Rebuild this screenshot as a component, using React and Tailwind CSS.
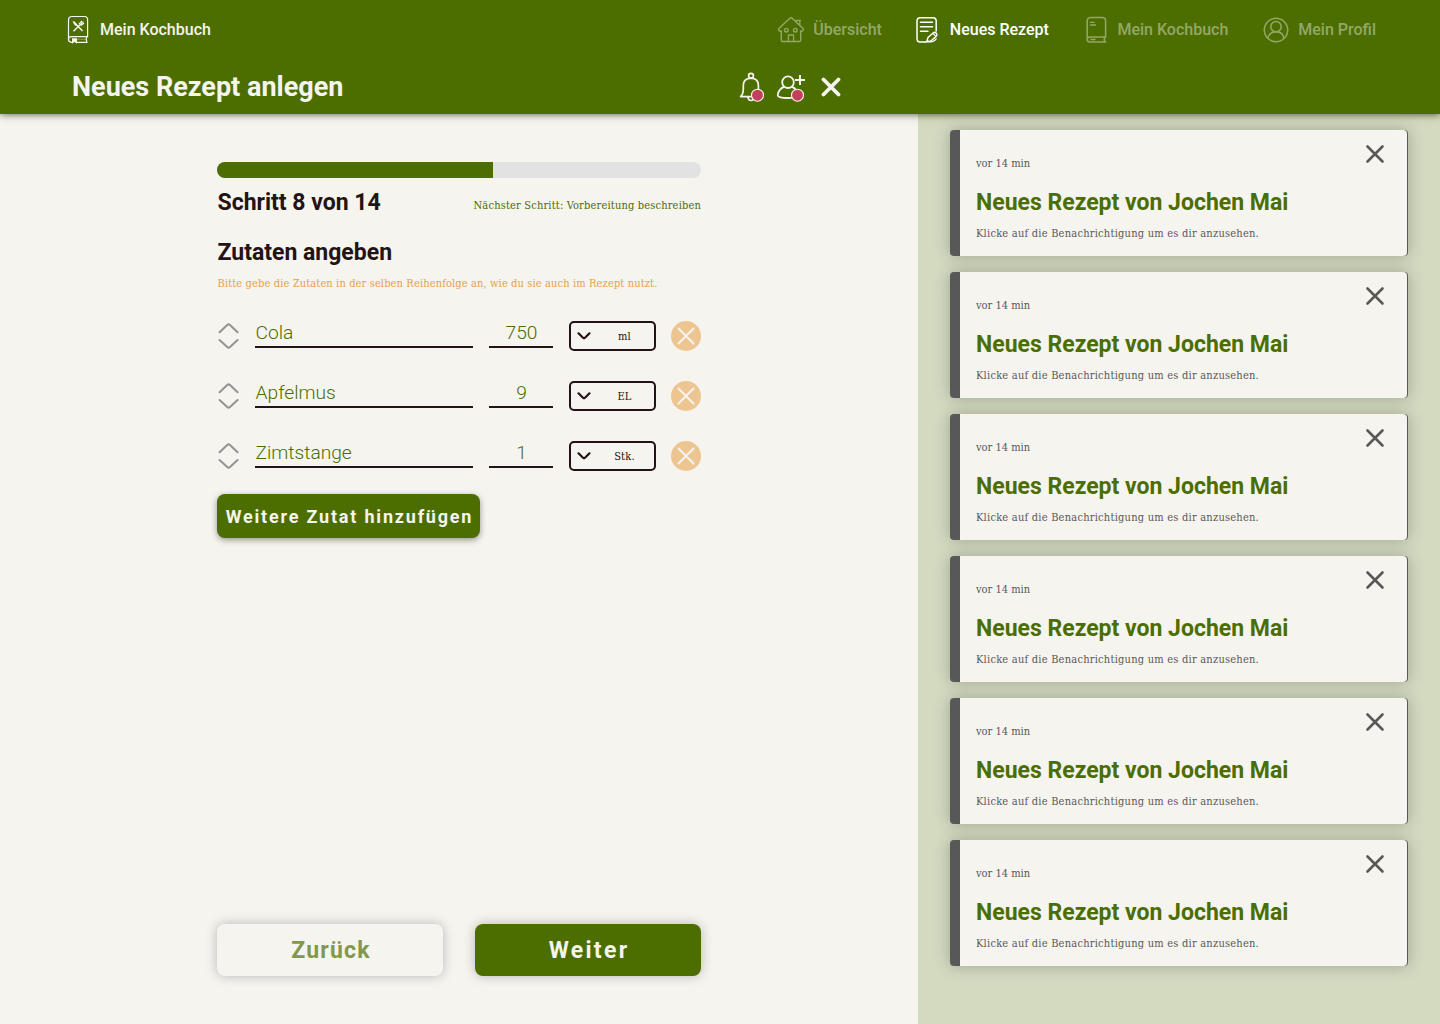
import React from "react";

const slab = "font-['Roboto_Slab','DejaVu_Serif_Condensed','DejaVu_Serif',serif]";

function CookbookLogo() {
  return (
    <svg width="22" height="30" viewBox="0 0 22 30" fill="none" stroke="#F6F4EF" strokeWidth="1.2">
      <path d="M1.5 25V5Q1.5 1.5 5 1.5H17.5Q20.6 1.5 20.6 4.6V21.6H4.5Q1.5 21.6 1.5 24.6Q1.5 27.3 4.5 27.3H5M9.5 27.3H20.6M19.8 21.6Q18.6 24.5 19.8 27.3" />
      <path d="M9 24.3H19" strokeWidth=".6" opacity=".6" />
      <path d="M5 23.3H10V28.8L7.5 27L5 28.8Z" fill="#F6F4EF" stroke="none" />
      <path d="M7 7L15.5 16M6.5 16.3L13 9.8" strokeWidth="1.5" />
      <path d="M5.6 5.8Q9.5 7.8 10.2 11L8.4 10.8Q6.2 9 5.6 5.8Z" fill="#F6F4EF" stroke="none" />
      <path d="M12 9L15 5.8M13 10L16.3 6.6M14 10.7L17 8" strokeWidth="1.1" />
    </svg>
  );
}

function HouseIcon() {
  return (
    <svg width="28" height="28" viewBox="0 0 28 28" fill="none" stroke="currentColor" strokeWidth="1.4" strokeLinejoin="round" strokeLinecap="round">
      <path d="M4.3 15.2V24Q4.3 25.5 5.8 25.5H22.2Q23.7 25.5 23.7 24V15.2" />
      <path d="M4.3 15.2H3.2Q.6 14.2 2.2 12.2L12.6 2.4Q14 1.2 15.4 2.4L25.8 12.2Q27.4 14.2 24.8 15.2H23.7" />
      <path d="M19.8 5.8V4.4H22.8V9M19 4.4H23.5M11.4 25.5V19H16.6V25.5" strokeWidth="1.3" />
      <circle cx="9.3" cy="14.2" r="1.8" />
      <circle cx="18.3" cy="14.2" r="1.8" />
    </svg>
  );
}

function NoteIcon() {
  return (
    <svg width="24" height="28" viewBox="0 0 24 28" fill="none" stroke="currentColor" strokeWidth="1.5" strokeLinejoin="round" strokeLinecap="round">
      <path d="M10.5 26H5Q2 26 2 22.5V5Q2 1.7 5.2 1.7H18Q21.2 1.7 21.2 5V15" />
      <path d="M5.5 6.2H17.5M5.5 10.7H17.5M5.5 15.2H13" />
      <path d="M11.8 25.5L13 21.5L18.4 16.8Q20 15.8 21.4 17.2Q22.5 18.6 21.3 20.2L15.8 25Z" />
      <path d="M18 17.3L20.6 20.2M10.5 26H14Q19 26 21.2 22.8" strokeWidth="1.2" />
    </svg>
  );
}

function BookIcon() {
  return (
    <svg width="22" height="28" viewBox="0 0 22 28" fill="none" stroke="currentColor" strokeWidth="1.5" strokeLinejoin="round" strokeLinecap="round">
      <path d="M1.2 23.5V5Q1.2 1.6 4.6 1.6H16.4Q19.6 1.6 19.6 4.8V21H4Q1.2 21 1.2 23.5Q1.2 26 4 26H19.6M18.8 21Q17.7 23.5 18.8 26" />
      <path d="M4.5 6.4H8M4.5 9H9.6M5 23.5H9" strokeWidth="1.4" />
    </svg>
  );
}

function ProfileIcon() {
  return (
    <svg width="26" height="26" viewBox="0 0 26 26" fill="none" stroke="currentColor" strokeWidth="1.5">
      <circle cx="13" cy="13" r="11.7" />
      <circle cx="13" cy="9.7" r="5.2" />
      <path d="M5 21.5Q6 14.8 13 14.8Q20 14.8 21 21.5" />
    </svg>
  );
}

function BellIcon() {
  return (
    <svg width="26" height="32" viewBox="0 0 26 32" fill="none" stroke="#F6F4EF" strokeWidth="1.7" strokeLinejoin="round">
      <circle cx="12" cy="3.7" r="2.4" />
      <path d="M1.6 24.6Q4.2 22.2 4.3 17V13.5Q4.3 6.6 12 6.2Q19.4 6.6 19.4 13.5V17Q19.5 22.2 22 24.6Z" />
      <path d="M9 24.8Q9.2 28.5 12 28.5Q15 28.5 15 24.8" />
      <circle cx="18.5" cy="23.2" r="6" fill="#C4405A" strokeWidth="1.1" />
    </svg>
  );
}

function AddPersonIcon() {
  return (
    <svg width="30" height="32" viewBox="0 0 30 32" fill="none" stroke="#F6F4EF" strokeWidth="1.8">
      <circle cx="12" cy="10.2" r="5.8" />
      <path d="M8.3 14.6Q2.4 17.2 1.7 23Q1.8 26.1 12 26Q22 26.1 22.3 23Q21.4 17.2 15.7 14.6" />
      <path d="M24 3V13M19 8H29" strokeWidth="1.9" />
      <circle cx="21.5" cy="23.2" r="6" fill="#C4405A" strokeWidth="1.1" />
    </svg>
  );
}

function Cross({ size, width }) {
  return (
    <svg width={size} height={size} viewBox="0 0 20 20" fill="none" stroke="currentColor" strokeWidth={width} strokeLinecap="round">
      <path d="M2.5 2.5L17.5 17.5M17.5 2.5L2.5 17.5" />
    </svg>
  );
}

function NavItem({ icon, label, className }) {
  return (
    <a className={"flex items-center whitespace-nowrap text-base font-medium " + className}>
      {icon}
      <span>{label}</span>
    </a>
  );
}

function IngredientRow({ name, amount, unit }) {
  return (
    <div className="flex h-[30px] items-center">
      <svg width="22" height="28" viewBox="0 0 22 28" fill="none" stroke="#939393" strokeWidth="2" strokeLinecap="round" className="shrink-0">
        <path d="M2.6 10.3L10.2 3Q11.6 1.8 13 3L20.6 10.3M2.6 18L10.2 25Q11.6 26.2 13 25L20.6 18" />
      </svg>
      <div className="mb-[4px] ml-4 h-[28px] w-[218px] border-b-2 border-[#231314] pl-[0.5px] text-[19.2px] font-light leading-[25px] text-[#4C6E00]">{name}</div>
      <div className="mb-[4px] ml-4 h-[28px] w-[64px] border-b-2 border-[#231314] pl-px text-center text-[19.2px] font-light leading-[25px] text-[#4C6E00]">{amount}</div>
      <div className="ml-4 flex h-[30px] w-[87px] items-center rounded-[5px] border-2 border-[#231314] text-[#231314]">
        <svg width="14" height="8" viewBox="0 0 14 8" fill="none" stroke="currentColor" strokeWidth="2.2" strokeLinecap="round" className="ml-[5.5px] shrink-0">
          <path d="M1.5 1.3L6 5.8Q7 6.7 8 5.8L12.5 1.3" />
        </svg>
        <span className={"ml-[14px] mt-[2px] w-[40px] text-center text-[11px] tracking-[0.2px] " + slab}>{unit}</span>
      </div>
      <div className="ml-[15px] flex size-[30px] items-center justify-center rounded-full bg-[#EDC591] text-[#F6F4EF]">
        <Cross size={20} width={2} />
      </div>
    </div>
  );
}

function Notification() {
  return (
    <article className="flex h-[126px] shrink-0 rounded bg-[#585858] pl-[10px] pr-px text-[#585858] shadow-[0_0_16px_rgba(0,0,0,0.25)]">
      <div className="flex flex-1 justify-between rounded-r bg-[#F6F4EF] pl-4 pr-[22px]">
        <div className="whitespace-nowrap">
          <p className={"mt-[26px] h-4 text-[11px] leading-4 " + slab}>vor 14 min</p>
          <h3 className="mt-[15px] h-8 text-[23px] font-bold leading-8 text-[#4C6E00]">Neues Rezept von Jochen Mai</h3>
          <p className={"mt-[7px] h-4 text-[11px] leading-4 tracking-[0.22px] " + slab}>Klicke auf die Benachrichtigung um es dir anzusehen.</p>
        </div>
        <button className="mt-[14px] size-5 shrink-0"><Cross size={20} width={2.6} /></button>
      </div>
    </article>
  );
}

export default function App() {
  return (
    <div className="flex h-[1024px] w-[1440px] flex-col overflow-hidden bg-[#F6F4EF] font-[Roboto,sans-serif]">
      <header className="relative z-10 h-[114px] shrink-0 bg-[#4C6E00] text-[#F6F4EF] shadow-[0_0_8px_rgba(0,0,0,0.7)]">
        <div className="flex h-[60px] items-center justify-between pl-[67px] pr-16">
          <NavItem icon={<CookbookLogo />} label="Mein Kochbuch" className="gap-[11px]" />
          <nav className="flex items-center">
            <NavItem icon={<HouseIcon />} label="Übersicht" className="mr-[33px] gap-2 text-[#94A866]" />
            <NavItem icon={<NoteIcon />} label="Neues Rezept" className="mr-[37px] gap-[11px] text-white" />
            <NavItem icon={<BookIcon />} label="Mein Kochbuch" className="mr-[35px] gap-[9.5px] text-[#94A866]" />
            <NavItem icon={<ProfileIcon />} label="Mein Profil" className="gap-[9px] text-[#94A866]" />
          </nav>
        </div>
        <div className="flex h-[54px] items-center pl-[72px]">
          <h1 className="w-[667px] pt-px text-[27px] font-bold">Neues Rezept anlegen</h1>
          <span className="mt-[2px]"><BellIcon /></span>
          <span className="ml-[11px] mt-[2px]"><AddPersonIcon /></span>
          <span className="ml-[15px]"><Cross size={20} width={3.8} /></span>
        </div>
      </header>
      <div className="flex flex-1">
        <main className="flex w-[918px] flex-col pl-[217px] pt-12">
          <div className="h-4 w-[484px] shrink-0 overflow-hidden rounded-full bg-[#E2E2E2]">
            <div className="h-full w-[276.4px] bg-[#4C6E00]" />
          </div>
          <div className="mt-2 flex h-8 w-[484px] items-center justify-between whitespace-nowrap pl-[0.5px]">
            <h2 className="pt-[2px] text-[23px] font-bold text-[#231314]">Schritt 8 von 14</h2>
            <p className={"mt-[8px] text-[11px] tracking-[0.16px] text-[#4C6E00] " + slab}>Nächster Schritt: Vorbereitung beschreiben</p>
          </div>
          <h2 className="mt-[19px] h-8 pl-[0.5px] text-[23px] font-bold leading-8 text-[#231314]">Zutaten angeben</h2>
          <p className={"mt-[7px] h-4 pl-[0.5px] text-[11px] leading-4 tracking-[0.12px] text-[#E5A04C] " + slab}>
            Bitte gebe die Zutaten in der selben Reihenfolge an, wie du sie auch im Rezept nutzt.
          </p>
          <div className="mt-[29px] flex flex-col gap-[30px]">
            <IngredientRow name="Cola" amount="750" unit="ml" />
            <IngredientRow name="Apfelmus" amount="9" unit="EL" />
            <IngredientRow name="Zimtstange" amount="1" unit="Stk." />
          </div>
          <button className="mt-[23px] h-11 w-[263px] shrink-0 whitespace-nowrap rounded-lg bg-[#4C6E00] pl-[2px] pt-px text-lg font-bold tracking-[1.8px] text-[#F6F4EF] shadow-[0_2px_6px_rgba(0,0,0,0.4)]">
            Weitere Zutat hinzufügen
          </button>
          <div className="mb-12 mt-auto flex gap-8 text-[23px] font-bold">
            <button className="h-[52px] w-[226px] rounded-lg bg-[#F6F4EF] pl-[2px] pt-[2px] tracking-[1.2px] text-[#82994D] shadow-[0_0_12px_rgba(0,0,0,0.25)]">Zurück</button>
            <button className="h-[52px] w-[226px] rounded-lg bg-[#4C6E00] pl-[2px] pt-[2px] tracking-[2.3px] text-[#F6F4EF] shadow-[0_0_12px_rgba(0,0,0,0.25)]">Weiter</button>
          </div>
        </main>
        <aside className="flex flex-1 flex-col gap-4 bg-[#D4DAC0] px-8 pt-4">
          {[1, 2, 3, 4, 5, 6].map((id) => (
            <Notification key={id} />
          ))}
        </aside>
      </div>
    </div>
  );
}
